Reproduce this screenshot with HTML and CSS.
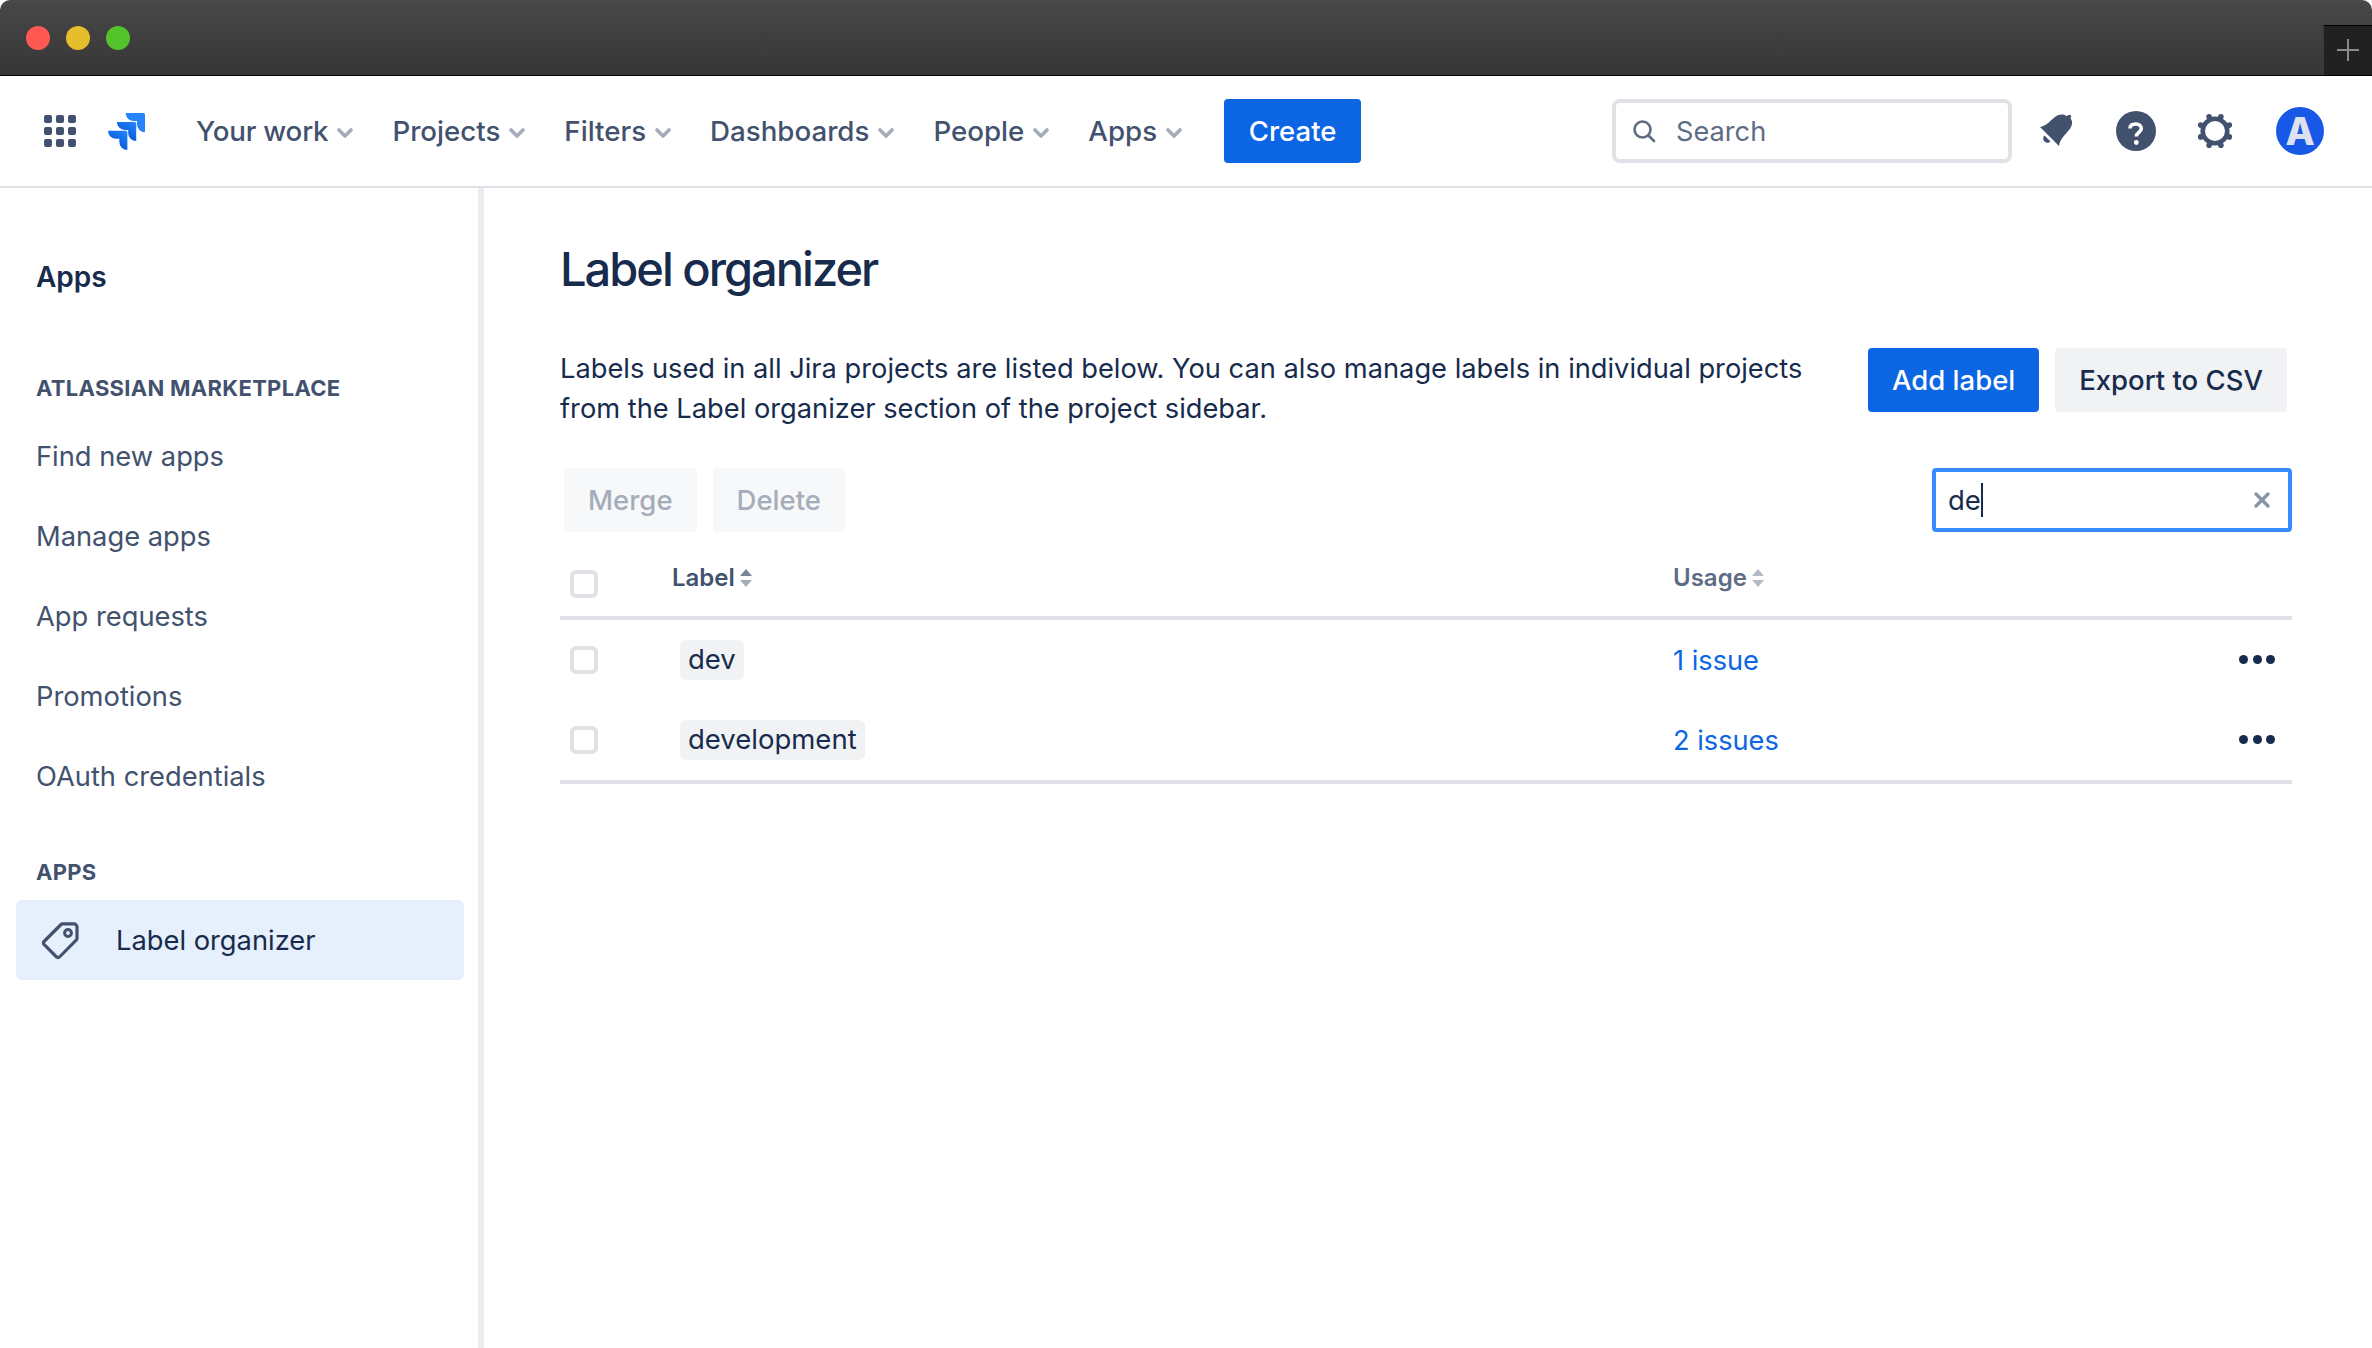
FILE: index.html
```html
<!DOCTYPE html>
<html lang="en">
<head>
<meta charset="utf-8">
<title>Label organizer</title>
<link rel="stylesheet" href="styles.css">
</head>
<body>
<div class="app">
  <header class="titlebar">
    <div class="lights">
      <span class="light red"></span>
      <span class="light yellow"></span>
      <span class="light green"></span>
    </div>
    <div class="newtab"><svg width="22" height="22" viewBox="0 0 22 22"><path d="M11 0V22M0 11H22" stroke="#8a8a8a" stroke-width="2" fill="none"/></svg></div>
  </header>
  <nav class="topnav">
    <svg class="grid-icon" width="32" height="32" viewBox="0 0 32 32" fill="#42526e">
      <rect x="0" y="0" width="8" height="8" rx="2"/><rect x="12" y="0" width="8" height="8" rx="2"/><rect x="24" y="0" width="8" height="8" rx="2"/>
      <rect x="0" y="12" width="8" height="8" rx="2"/><rect x="12" y="12" width="8" height="8" rx="2"/><rect x="24" y="12" width="8" height="8" rx="2"/>
      <rect x="0" y="24" width="8" height="8" rx="2"/><rect x="12" y="24" width="8" height="8" rx="2"/><rect x="24" y="24" width="8" height="8" rx="2"/>
    </svg>
    <svg class="logo" width="37" height="37" viewBox="0 0 24 24">
      <defs>
        <linearGradient id="lg1" x1="1" y1="0" x2="0.3" y2="1"><stop offset="0" stop-color="#2684ff"/><stop offset="1" stop-color="#0052cc"/></linearGradient>
      </defs>
      <path fill="#2684ff" d="M23.013 0H11.455a5.215 5.215 0 0 0 5.215 5.215h2.129v2.057A5.215 5.215 0 0 0 24 12.483V1.005A1.001 1.001 0 0 0 23.013 0z"/>
      <path fill="url(#lg1)" d="M17.296 5.757H5.736a5.215 5.215 0 0 0 5.215 5.214h2.129v2.058a5.218 5.218 0 0 0 5.215 5.214V6.758a1.001 1.001 0 0 0-1.001-1.001z"/>
      <path fill="url(#lg1)" d="M11.571 11.513H0a5.218 5.218 0 0 0 5.232 5.215h2.13v2.057A5.215 5.215 0 0 0 12.575 24V12.518a1.005 1.005 0 0 0-1.005-1.005z"/>
    </svg>
    <ul class="menu">
      <li class="menu-item tight">Your work<svg class="chev" width="16" height="10" viewBox="0 0 16 10"><path d="M2 2l6 6 6-6" fill="none" stroke="#a5adba" stroke-width="3.6" stroke-linecap="round" stroke-linejoin="round"/></svg></li>
      <li class="menu-item">Projects<svg class="chev" width="16" height="10" viewBox="0 0 16 10"><path d="M2 2l6 6 6-6" fill="none" stroke="#a5adba" stroke-width="3.6" stroke-linecap="round" stroke-linejoin="round"/></svg></li>
      <li class="menu-item">Filters<svg class="chev" width="16" height="10" viewBox="0 0 16 10"><path d="M2 2l6 6 6-6" fill="none" stroke="#a5adba" stroke-width="3.6" stroke-linecap="round" stroke-linejoin="round"/></svg></li>
      <li class="menu-item">Dashboards<svg class="chev" width="16" height="10" viewBox="0 0 16 10"><path d="M2 2l6 6 6-6" fill="none" stroke="#a5adba" stroke-width="3.6" stroke-linecap="round" stroke-linejoin="round"/></svg></li>
      <li class="menu-item">People<svg class="chev" width="16" height="10" viewBox="0 0 16 10"><path d="M2 2l6 6 6-6" fill="none" stroke="#a5adba" stroke-width="3.6" stroke-linecap="round" stroke-linejoin="round"/></svg></li>
      <li class="menu-item">Apps<svg class="chev" width="16" height="10" viewBox="0 0 16 10"><path d="M2 2l6 6 6-6" fill="none" stroke="#a5adba" stroke-width="3.6" stroke-linecap="round" stroke-linejoin="round"/></svg></li>
    </ul>
    <button class="btn primary create">Create</button>
    <div class="search">
      <svg width="24" height="24" viewBox="0 0 24 24"><circle cx="10.5" cy="10.5" r="8" fill="none" stroke="#5e6c84" stroke-width="2.6"/><path d="M16.5 16.5L22 22" stroke="#5e6c84" stroke-width="2.6" stroke-linecap="round"/></svg>
      <span class="search-text">Search</span>
    </div>
    <svg class="icon bell" width="36" height="36" viewBox="0 0 36 36" fill="#42526e">
      <path d="M2 14C8 13 12 8 17 4C21 1 26 1 28 3L31 2a1.500 1.500 0 0 1 2 2L32.500 5.500C35 8 34.500 13 31 17C27 22 22 26 21 33z"/>
      <path d="M6.500 22.500L12.500 28.500A4.200 4.200 0 0 1 6.500 22.500z"/>
    </svg>
    <svg class="icon help" width="40" height="40" viewBox="0 0 40 40">
      <circle cx="20" cy="20" r="20" fill="#42526e"/>
      <path d="M14 17.500c0-3 2.500-4.500 5.800-4.500 3.300 0 5.500 1.900 5.500 4.500 0 3.900-5 3.900-5 8" fill="none" stroke="#fff" stroke-width="3.600"/>
      <circle cx="20.300" cy="31.500" r="2.400" fill="#fff"/>
    </svg>
    <svg class="icon gear" width="38" height="38" viewBox="0 0 38 38" fill="#42526e">
      <circle cx="19" cy="19" r="12.300" fill="none" stroke="#42526e" stroke-width="4.600"/>
      <circle cx="33.300" cy="13.100" r="2.800"/><circle cx="33.300" cy="24.900" r="2.800"/><circle cx="4.700" cy="13.100" r="2.800"/><circle cx="4.700" cy="24.900" r="2.800"/>
      <circle cx="13.100" cy="4.700" r="2.800"/><circle cx="24.900" cy="4.700" r="2.800"/><circle cx="13.100" cy="33.300" r="2.800"/><circle cx="24.900" cy="33.300" r="2.800"/>
    </svg>
    <div class="avatar">A</div>
  </nav>
  <div class="body">
    <aside class="sidebar">
      <div class="side-title">Apps</div>
      <div class="side-heading first">ATLASSIAN MARKETPLACE</div>
      <a class="side-link">Find new apps</a>
      <a class="side-link">Manage apps</a>
      <a class="side-link">App requests</a>
      <a class="side-link">Promotions</a>
      <a class="side-link">OAuth credentials</a>
      <div class="side-heading second">APPS</div>
      <a class="side-link selected">
        <svg width="40" height="40" viewBox="0 0 40 40"><path d="M3 21.500L20 4.500a2 2 0 0 1 1.400-.6h11.600a3 3 0 0 1 3 3v11.600a2 2 0 0 1-.6 1.400L18.500 37a2 2 0 0 1-2.900 0L3 24.400a2 2 0 0 1 0-2.900z" fill="none" stroke="#42526e" stroke-width="3.200" stroke-linejoin="round"/><circle cx="27" cy="13" r="3.400" fill="none" stroke="#42526e" stroke-width="3"/></svg>
        <span>Label organizer</span>
      </a>
    </aside>
    <main class="content">
      <h1 class="title">Label organizer</h1>
      <div class="intro">
        <p class="intro-text">Labels used in all Jira projects are listed below. You can also manage labels in individual projects from the Label organizer section of the project sidebar.</p>
        <div class="intro-actions">
          <button class="btn primary">Add label</button>
          <button class="btn subtle">Export to CSV</button>
        </div>
      </div>
      <div class="toolbar">
        <button class="btn disabled">Merge</button>
        <button class="btn disabled">Delete</button>
        <div class="filter">
          <span class="filter-value">de</span><span class="caret"></span>
          <svg class="filter-clear" width="16" height="16" viewBox="0 0 16 16"><path d="M2 2L14 14M14 2L2 14" stroke="#8993a4" stroke-width="3.200" stroke-linecap="round"/></svg>
        </div>
      </div>
      <div class="table">
        <div class="row head">
          <span class="check head-check"></span>
          <span class="col-label th">Label<svg class="sort" width="14" height="18" viewBox="0 0 14 18"><path d="M7 0l6 7H1z" fill="#7a869a"/><path d="M7 18l6-7H1z" fill="#a5adba"/></svg></span>
          <span class="col-usage th light">Usage<svg class="sort" width="14" height="18" viewBox="0 0 14 18"><path d="M7 0l6 7H1z" fill="#b3bac5"/><path d="M7 18l6-7H1z" fill="#b3bac5"/></svg></span>
        </div>
        <div class="row item">
          <span class="check"></span>
          <span class="col-label"><span class="tag">dev</span></span>
          <a class="col-usage link">1 issue</a>
          <span class="dots"><i></i><i></i><i></i></span>
        </div>
        <div class="row item">
          <span class="check"></span>
          <span class="col-label"><span class="tag">development</span></span>
          <a class="col-usage link">2 issues</a>
          <span class="dots"><i></i><i></i><i></i></span>
        </div>
      </div>
    </main>
  </div>
</div>
</body>
</html>
```

FILE: styles.css
```css
* { box-sizing: border-box; }
html, body { margin: 0; height: 100%; background: #fff; overflow: hidden; }
body { font-family: "Inter", "Liberation Sans", sans-serif; font-size: 27.5px; color: #172b4d; }
.app { display: flex; flex-direction: column; height: 1348px; }

.titlebar {
  height: 76px; flex: none; display: flex; justify-content: space-between; align-items: flex-end;
  background: linear-gradient(#4a4a4a 0, #474747 4px, #363636 100%);
  border-bottom: 1px solid #000; border-radius: 10px 10px 0 0;
}
.lights { display: flex; gap: 16px; padding: 0 0 25px 26px; }
.light { width: 24px; height: 24px; border-radius: 50%; }
.red { background: #fe5953; }
.yellow { background: #e6bd2b; }
.green { background: #53c22b; }
.newtab { width: 49px; height: 50px; background: #212121; border-top: 1px solid #000; border-left: 1px solid #3a3a3a; display: flex; align-items: center; justify-content: center; padding-bottom: 2px; }

.topnav { height: 112px; flex: none; display: flex; align-items: center; padding: 0 48px 0 44px; border-bottom: 2px solid #dfe1e6; }
.grid-icon { flex: none; }
.logo { flex: none; margin-left: 32px; }
.menu { display: flex; list-style: none; margin: 0 0 0 51px; padding: 0; gap: 39px; font-size: 27.7px; }
.menu-item { display: flex; align-items: center; color: #42526e; font-weight: 500; white-space: nowrap; }
.menu-item.tight { letter-spacing: -0.2px; }
.chev { margin-left: 9px; margin-top: 4px; }
.btn { font: inherit; font-weight: 500; height: 64px; padding: 0 24px; border: 0; border-radius: 4px; white-space: nowrap; }
.primary { background: #0c66e4; color: #fff; }
.subtle { background: #f1f2f4; color: #172b4d; }
.disabled { background: #f7f8f9; color: #a5adba; }
.create { margin-left: 42px; margin-right: auto; width: 137px; padding: 0; }
.search { width: 400px; height: 64px; border: 4px solid #dfe1e6; border-radius: 8px; display: flex; align-items: center; padding-left: 16px; gap: 20px; color: #5e6c84; margin-right: 26px; font-size: 27.2px; }
.search-text { line-height: 1; padding-top: 2px; }
.icon { flex: none; }
.bell { margin-right: 42px; }
.help { margin-right: 40px; }
.gear { margin-right: 42px; }
.avatar { width: 48px; height: 48px; border-radius: 50%; background: #1858e6; color: #dfe1f0; font-weight: 800; font-size: 38px; display: flex; align-items: center; justify-content: center; flex: none; }

.body { flex: 1; display: flex; min-height: 0; }
.sidebar { width: 484px; flex: none; border-right: 6px solid #ebecf0; padding: 0 14px 0 16px; display: flex; flex-direction: column; font-size: 27.3px; }
.side-title { font-weight: 600; padding: 72px 0 0 20px; line-height: 34px; margin-bottom: 80px; font-size: 28px; }
.side-heading { font-size: 22px; font-weight: 700; color: #42526e; padding-left: 20px; line-height: 28px; letter-spacing: 0.3px; }
.side-heading.first { margin-bottom: 14px; }
.side-heading.second { margin-top: 42px; margin-bottom: 14px; }
.side-link { height: 80px; display: flex; align-items: center; padding-left: 20px; color: #42526e; }
.side-link.selected { background: #e6effc; border-radius: 6px; color: #172b4d; gap: 35px; padding-left: 25px; }

.content { flex: 1; padding: 0 80px 0 76px; min-width: 0; }
.title { font-size: 47px; font-weight: 500; margin: 53px 0 0; line-height: 56px; letter-spacing: -2px; }
.intro { display: flex; justify-content: space-between; margin-top: 51px; }
.intro-text { width: 1270px; margin: 0; padding-top: 1px; line-height: 40px; font-size: 27.25px; }
.intro-actions { display: flex; gap: 16px; margin-right: 5px; flex: none; }
.toolbar { display: flex; gap: 16px; align-items: center; margin-top: 39px; padding-left: 4px; }
.filter { margin-left: auto; width: 360px; height: 64px; border: 4px solid #388bff; border-radius: 4px; display: flex; align-items: center; padding-left: 12px; position: relative; }
.caret { width: 2px; height: 34px; background: #172b4d; }
.filter-clear { position: absolute; right: 18px; top: 20px; }

.table { margin-top: 0; }
.row { display: flex; align-items: center; position: relative; }
.head { height: 88px; border-bottom: 4px solid #dfe1e6; }
.item { height: 80px; }
.item:last-child { height: 84px; border-bottom: 4px solid #dfe1e6; }
.check { width: 28px; height: 28px; border: 4px solid #dfe1e6; border-radius: 6px; margin-left: 10px; flex: none; }
.head-check { margin-top: 20px; }
.col-label { flex: none; display: flex; align-items: center; }
.col-usage { flex: none; display: flex; align-items: center; }
.th { font-size: 24px; font-weight: 600; color: #42526e; margin-top: 7px; }
.th.light { color: #5e6c84; }
.sort { margin-left: 4px; flex: none; }
.head .col-label { margin-left: 74px; width: 1001px; }
.item .col-label { margin-left: 82px; width: 993px; }
.tag { background: #f1f2f4; border-radius: 6px; height: 40px; padding: 0 8px 2px; display: flex; align-items: center; }
.link { color: #0c66e4; font-size: 27.2px; }
.dots { position: absolute; right: 17px; top: 40px; display: flex; gap: 4.5px; margin-top: -5px; }
.dots i { width: 9px; height: 9px; border-radius: 50%; background: #172b4d; }
```
